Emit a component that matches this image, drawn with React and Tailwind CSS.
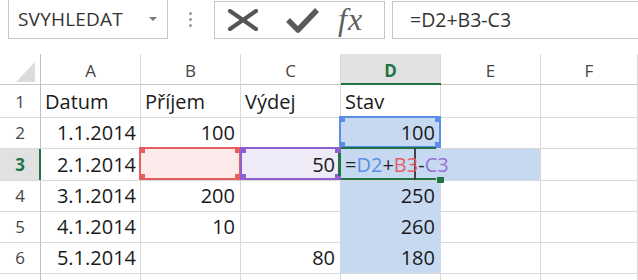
import React from "react";

const cell =
  "relative flex items-end border-r border-b border-[#d9d9d9] px-[4px] pb-[3px] text-[20px] leading-[24px] text-[#1a1a1a] whitespace-nowrap";
const rowHead =
  "relative flex items-end justify-center border-r border-b border-[#d9d9d9] border-r-[#bfbfbf] pb-[3px] text-[17px] leading-[24px] text-[#444]";
const colHead =
  "relative flex items-center justify-center pt-[3px] border-r border-b border-[#d9d9d9] border-b-[#c8c8c8] text-[17px] text-[#444]";

function Handles({ color }) {
  return (
    <>
      <div className={"absolute left-[-2px] top-[-2px] w-[6px] h-[6px] " + color} />
      <div className={"absolute right-[-2px] top-[-2px] w-[6px] h-[6px] " + color} />
      <div className={"absolute left-[-2px] bottom-[-2px] w-[6px] h-[6px] " + color} />
      <div className={"absolute right-[-2px] bottom-[-2px] w-[6px] h-[6px] " + color} />
    </>
  );
}

export default function App() {
  return (
    <div className="w-[638px] h-[280px] overflow-hidden bg-white font-['Open_Sans',sans-serif]">
      {/* toolbar */}
      <div className="flex h-[39px]">
        <div className="ml-[8px] w-[160px] h-[39px] border border-t-0 border-[#c6c6c6] flex items-center pl-[9px] pr-[10px]">
          <span className="text-[19px] text-[#333] tracking-[0.2px]">SVYHLEDAT</span>
          <div className="ml-auto w-0 h-0 border-l-[4px] border-r-[4px] border-t-[4px] border-l-transparent border-r-transparent border-t-[#777]" />
        </div>
        <div className="ml-[21px] flex flex-col justify-center gap-[3px] pb-[1px]">
          <div className="w-[3px] h-[3px] rounded-full bg-[#999]" />
          <div className="w-[3px] h-[3px] rounded-full bg-[#999]" />
          <div className="w-[3px] h-[3px] rounded-full bg-[#999]" />
        </div>
        <div className="ml-[22px] mt-[1px] w-[171px] h-[38px] border border-[#c6c6c6] flex items-center">
          <svg className="ml-[13px]" width="30" height="22" viewBox="0 0 30 22">
            <path d="M2 2 L28 20 M28 2 L2 20" stroke="#555" strokeWidth="4" strokeLinecap="round" fill="none" />
          </svg>
          <svg className="ml-[27px]" width="34" height="26" viewBox="0 0 34 26">
            <path d="M3 13 L13 23 L32 3" stroke="#5a5a5a" strokeWidth="5.5" strokeLinejoin="round" fill="none" />
          </svg>
          <span className="ml-[19px] font-['Liberation_Serif',serif] italic text-[32px] leading-none text-[#5f5f5f] tracking-[1px] pb-[2px]">
            fx
          </span>
        </div>
        <div className="ml-[7px] mt-[1px] flex-1 h-[38px] border border-r-0 border-[#c6c6c6] flex items-center pl-[17px]">
          <span className="text-[19.5px] text-[#333]">=D2+B3-C3</span>
        </div>
      </div>

      <div className="h-[15px]" />

      {/* grid */}
      <div className="grid grid-cols-[41px_100px_100px_100px_100px_100px_1fr] grid-rows-[31px_33px_31px_32px_31px_31px_31px_31px]">
        {/* header row */}
        <div className="relative border-r border-b border-[#d9d9d9] border-r-[#bfbfbf] border-b-[#c8c8c8]">
          <svg className="absolute left-0 top-0" width="40" height="30" viewBox="0 0 40 30">
            <polygon points="16,28 35,28 35,8" fill="#dcdcdc" />
          </svg>
        </div>
        <div className={colHead}>A</div>
        <div className={colHead}>B</div>
        <div className={colHead}>C</div>
        <div className={colHead + " bg-[#e1e1e1] font-bold text-[#217346]"}>
          D
          <div className="absolute left-0 right-[-1px] bottom-[-1px] h-[2px] bg-[#217346]" />
        </div>
        <div className={colHead}>E</div>
        <div className={colHead}>F</div>

        {/* row 1 */}
        <div className={rowHead}>1</div>
        <div className={cell}>Datum</div>
        <div className={cell}>Příjem</div>
        <div className={cell}>Výdej</div>
        <div className={cell}>Stav</div>
        <div className={cell}></div>
        <div className={cell}></div>

        {/* row 2 */}
        <div className={rowHead}>2</div>
        <div className={cell + " justify-end"}>1.1.2014</div>
        <div className={cell + " justify-end pr-[5px]"}>100</div>
        <div className={cell}></div>
        <div className={cell + " justify-end pr-[5px] bg-[#c6d9f1]"}>
          100
          <div className="absolute left-[-2px] top-[-2px] right-[-1px] bottom-[0px] border-2 border-[#5b8ee8] z-10">
            <Handles color="bg-[#5b8ee8]" />
          </div>
        </div>
        <div className={cell}></div>
        <div className={cell}></div>

        {/* row 3 */}
        <div className={rowHead + " bg-[#e1e1e1] font-bold text-[#217346]"}>
          3
          <div className="absolute right-[-1px] top-0 bottom-0 w-[2px] bg-[#217346]" />
        </div>
        <div className={cell + " justify-end"}>2.1.2014</div>
        <div className={cell + " bg-[#fdeaea]"}>
          <div className="absolute left-[-2px] top-[-2px] right-[-1px] bottom-[0px] border-2 border-[#e35f5f] z-10">
            <Handles color="bg-[#e35f5f]" />
          </div>
        </div>
        <div className={cell + " justify-end pr-[5px] bg-[#efeaf7]"}>
          50
          <div className="absolute left-[-1px] top-[-2px] right-[-1px] bottom-[0px] border-2 border-[#8e5fd0] z-20">
            <Handles color="bg-[#8e5fd0]" />
          </div>
        </div>
        <div className={cell + " bg-[#c6d9f1] border-r-[#c6d9f1] z-30 overflow-visible"}>
          <span className="relative z-30">
            <span className="text-[#222]">=</span>
            <span className="text-[#5b8ee8]">D2</span>
            <span className="text-[#222]">+</span>
            <span className="text-[#e35f5f]">B3</span>
            <span className="text-[#222]">-</span>
            <span className="text-[#9b6fd8]">C3</span>
          </span>
          <div className="absolute left-0 right-[4px] top-[-2px] h-[2px] bg-[#217346]" />
          <div className="absolute left-0 right-[4px] bottom-0 h-[2px] bg-[#217346]" />
          <div className="absolute left-[-3px] top-[4px] bottom-[4px] w-[3px] bg-[#217346]" />
          <div className="absolute right-[-4px] bottom-[-3px] w-[7px] h-[6px] bg-[#217346]" />
          <div className="absolute left-[73px] top-[-1px] bottom-0 w-[2px] bg-[#444]" />
        </div>
        <div className={cell + " bg-[#c6d9f1]"}></div>
        <div className={cell}></div>

        {/* row 4 */}
        <div className={rowHead}>4</div>
        <div className={cell + " justify-end"}>3.1.2014</div>
        <div className={cell + " justify-end pr-[5px]"}>200</div>
        <div className={cell + " border-r-[#c6d9f1]"}></div>
        <div className={cell + " justify-end pr-[5px] bg-[#c6d9f1] border-b-[#c6d9f1]"}>250</div>
        <div className={cell}></div>
        <div className={cell}></div>

        {/* row 5 */}
        <div className={rowHead}>5</div>
        <div className={cell + " justify-end"}>4.1.2014</div>
        <div className={cell + " justify-end pr-[5px]"}>10</div>
        <div className={cell + " border-r-[#c6d9f1]"}></div>
        <div className={cell + " justify-end pr-[5px] bg-[#c6d9f1] border-b-[#c6d9f1]"}>260</div>
        <div className={cell}></div>
        <div className={cell}></div>

        {/* row 6 */}
        <div className={rowHead}>6</div>
        <div className={cell + " justify-end"}>5.1.2014</div>
        <div className={cell}></div>
        <div className={cell + " justify-end pr-[5px] border-r-[#c6d9f1]"}>80</div>
        <div className={cell + " justify-end pr-[5px] bg-[#c6d9f1]"}>180</div>
        <div className={cell}></div>
        <div className={cell}></div>

        {/* row 7 (mostly below the visible area) */}
        <div className={rowHead}></div>
        <div className={cell}></div>
        <div className={cell}></div>
        <div className={cell}></div>
        <div className={cell}></div>
        <div className={cell}></div>
        <div className={cell}></div>
      </div>
    </div>
  );
}
